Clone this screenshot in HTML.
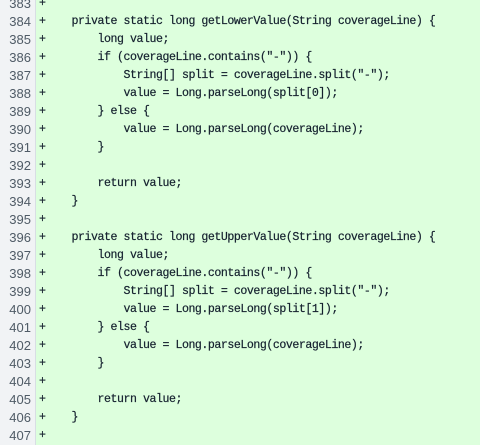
<!DOCTYPE html>
<html><head><style>
html,body{margin:0;padding:0;width:480px;height:440px;overflow:hidden;background:#ddffdd;}
.wrap{position:absolute;top:-5px;left:0;width:480px;}
.row{height:18px;line-height:18px;white-space:pre;font-family:"Liberation Mono",monospace;font-size:11.6px;letter-spacing:-0.46px;position:relative;}
.n{position:absolute;left:0;top:0;width:36px;height:18px;background:#f1f3f5;border-right:1px solid #d8dee4;text-align:right;box-sizing:border-box;padding-right:4px;color:#4f5b66;font-family:"Liberation Sans",sans-serif;font-size:13px;letter-spacing:0;}
.c{position:absolute;left:39px;top:0;color:#14202e;-webkit-text-stroke:0.2px #14202e;}
</style></head><body><div class="wrap">
<div class="row"><span class="n">383</span><span class="c">+</span></div>
<div class="row"><span class="n">384</span><span class="c">+    private static long getLowerValue(String coverageLine) {</span></div>
<div class="row"><span class="n">385</span><span class="c">+        long value;</span></div>
<div class="row"><span class="n">386</span><span class="c">+        if (coverageLine.contains("-")) {</span></div>
<div class="row"><span class="n">387</span><span class="c">+            String[] split = coverageLine.split("-");</span></div>
<div class="row"><span class="n">388</span><span class="c">+            value = Long.parseLong(split[0]);</span></div>
<div class="row"><span class="n">389</span><span class="c">+        } else {</span></div>
<div class="row"><span class="n">390</span><span class="c">+            value = Long.parseLong(coverageLine);</span></div>
<div class="row"><span class="n">391</span><span class="c">+        }</span></div>
<div class="row"><span class="n">392</span><span class="c">+</span></div>
<div class="row"><span class="n">393</span><span class="c">+        return value;</span></div>
<div class="row"><span class="n">394</span><span class="c">+    }</span></div>
<div class="row"><span class="n">395</span><span class="c">+</span></div>
<div class="row"><span class="n">396</span><span class="c">+    private static long getUpperValue(String coverageLine) {</span></div>
<div class="row"><span class="n">397</span><span class="c">+        long value;</span></div>
<div class="row"><span class="n">398</span><span class="c">+        if (coverageLine.contains("-")) {</span></div>
<div class="row"><span class="n">399</span><span class="c">+            String[] split = coverageLine.split("-");</span></div>
<div class="row"><span class="n">400</span><span class="c">+            value = Long.parseLong(split[1]);</span></div>
<div class="row"><span class="n">401</span><span class="c">+        } else {</span></div>
<div class="row"><span class="n">402</span><span class="c">+            value = Long.parseLong(coverageLine);</span></div>
<div class="row"><span class="n">403</span><span class="c">+        }</span></div>
<div class="row"><span class="n">404</span><span class="c">+</span></div>
<div class="row"><span class="n">405</span><span class="c">+        return value;</span></div>
<div class="row"><span class="n">406</span><span class="c">+    }</span></div>
<div class="row"><span class="n">407</span><span class="c">+</span></div>
</div></body></html>
